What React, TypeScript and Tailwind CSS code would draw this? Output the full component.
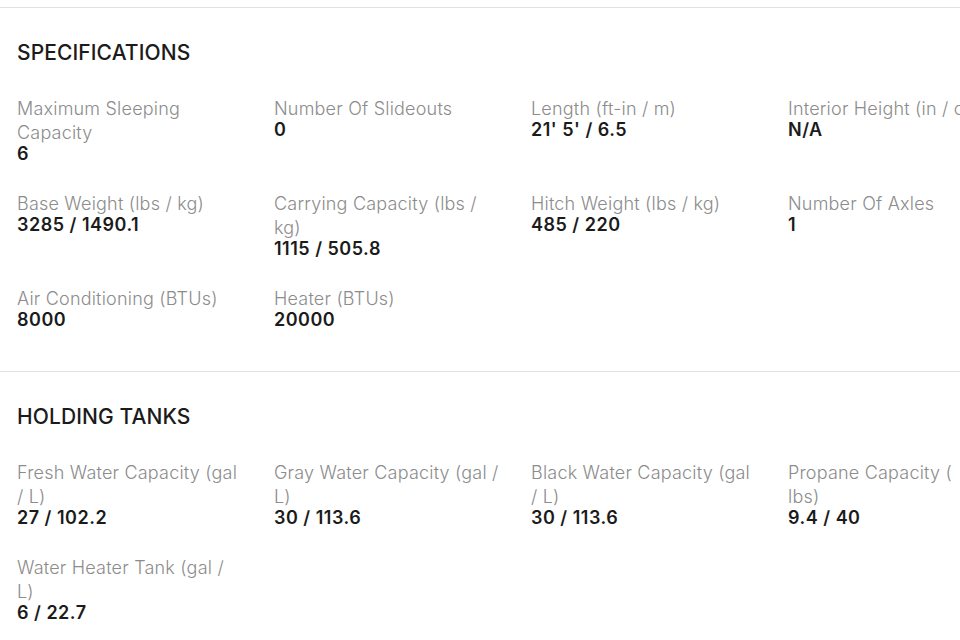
import React from "react";

type Spec = { label: string; value: string };

const specs: Spec[] = [
  { label: "Maximum Sleeping Capacity", value: "6" },
  { label: "Number Of Slideouts", value: "0" },
  { label: "Length (ft-in / m)", value: "21' 5' / 6.5" },
  { label: "Interior Height (in / cm)", value: "N/A" },
  { label: "Base Weight (lbs / kg)", value: "3285 / 1490.1" },
  { label: "Carrying Capacity (lbs / kg)", value: "1115 / 505.8" },
  { label: "Hitch Weight (lbs / kg)", value: "485 / 220" },
  { label: "Number Of Axles", value: "1" },
  { label: "Air Conditioning (BTUs)", value: "8000" },
  { label: "Heater (BTUs)", value: "20000" },
];

const tanks: Spec[] = [
  { label: "Fresh Water Capacity (gal / L)", value: "27 / 102.2" },
  { label: "Gray Water Capacity (gal / L)", value: "30 / 113.6" },
  { label: "Black Water Capacity (gal / L)", value: "30 / 113.6" },
  { label: "Propane Capacity (\nlbs)", value: "9.4 / 40" },
  { label: "Water Heater Tank (gal / L)", value: "6 / 22.7" },
];

const Section: React.FC<{ title: string; items: Spec[] }> = ({ title, items }) => (
  <section className="border-t border-[#e2e2e2] px-[17px] pt-[31px] pb-[42px]">
    <h2 className="text-[21px] leading-[28px] font-medium text-[#1b1b1b] tracking-[0.1px] mb-[30px]">{title}</h2>
    <div className="grid grid-cols-[226px_226px_226px_226px] gap-x-[31px] gap-y-[29px]">
      {items.map((s) => (
        <div key={s.label} className="text-[18px]">
          <div className="text-[#8c8c8c] font-light tracking-[0.2px] leading-6 whitespace-pre-line">{s.label}</div>
          <div className="text-[#1b1b1b] font-semibold tracking-[0.5px] leading-[18px]">{s.value}</div>
        </div>
      ))}
    </div>
  </section>
);

export default function App() {
  return (
    <div className="w-[960px] h-[640px] overflow-hidden bg-white" style={{ fontFamily: "Inter, 'Noto Sans', sans-serif" }}>
      <div className="w-[1100px] pt-[7px]">
        <Section title="SPECIFICATIONS" items={specs} />
        <Section title="HOLDING TANKS" items={tanks} />
      </div>
    </div>
  );
}
